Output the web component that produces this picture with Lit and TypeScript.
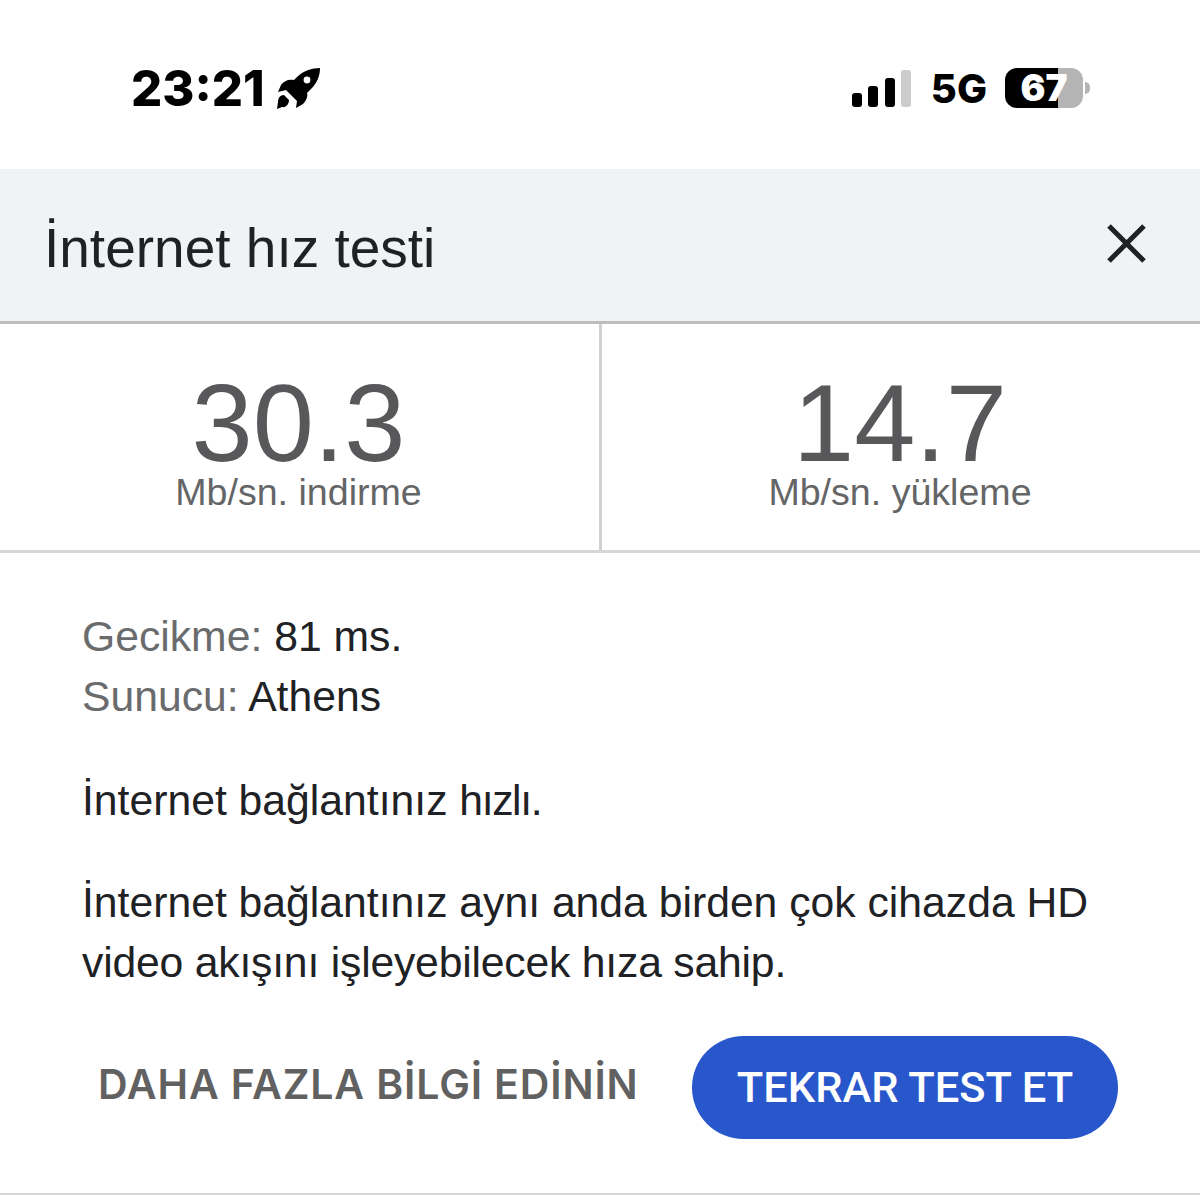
import {LitElement, html, css} from 'lit';
import {customElement} from 'lit/decorators.js';

@customElement('app-root')
export class AppRoot extends LitElement {
  static styles = css`
    :host {
      display: block;
      width: 1200px;
      height: 1195px;
      overflow: hidden;
      background: #fff;
      font-family: "Liberation Sans", Arial, sans-serif;
      color: #202124;
    }

    .status {
      height: 169px;
      box-sizing: border-box;
      padding: 8px 110px 0 131px;
      display: flex;
      align-items: center;
      justify-content: space-between;
      color: #000;
    }

    .status-left,
    .status-right {
      display: flex;
      align-items: center;
    }

    .time {
      font: 800 49px/1 Inter, sans-serif;
    }

    .rocket {
      margin-left: 5px;
      width: 56px;
      height: 54px;
    }

    .signal {
      display: flex;
      align-items: flex-end;
      gap: 6.3px;
      height: 37px;
    }

    .signal span {
      width: 10px;
      border-radius: 3px;
      background: #000;
    }

    .net {
      margin-left: 20px;
      font: 800 40px/1 Inter, sans-serif;
    }

    .battery {
      margin: -2px 0 0 18px;
      display: flex;
      align-items: center;
      gap: 2px;
    }

    .battery-body {
      width: 78px;
      height: 40px;
      border-radius: 12px;
      background: linear-gradient(90deg, #000 0 53px, #b4b4b4 53px);
      color: #fff;
      font: 900 37px/40px Inter, sans-serif;
      text-align: center;
    }

    .battery-cap {
      width: 5px;
      height: 12px;
      border-radius: 0 5px 5px 0;
      background: #b4b4b4;
    }

    .header {
      height: 155px;
      box-sizing: border-box;
      padding: 6px 53px 0 44px;
      display: flex;
      align-items: center;
      justify-content: space-between;
      background: #f1f2f4;
      border-bottom: 3px solid #bcbdbf;
    }

    .title {
      font-size: 55px;
      line-height: 1;
      color: #202124;
    }

    .close {
      width: 41px;
      height: 41px;
      margin-top: -10px;
    }

    .stats {
      height: 229px;
      box-sizing: border-box;
      display: grid;
      grid-template-columns: 599px 1fr;
      border-bottom: 3px solid #d6d6d6;
    }

    .stat {
      padding: 51px 2px 0 0;
      text-align: center;
      color: #58585a;
    }

    .stat + .stat {
      border-left: 3px solid #d0d0d0;
    }

    .value {
      font-size: 110px;
      line-height: 96px;
    }

    .unit {
      font-size: 37.6px;
      line-height: 42px;
      color: #646567;
    }

    .body {
      padding: 53px 82px 0;
      font-size: 42.7px;
      line-height: 60px;
    }

    .label {
      color: #6a6b6d;
    }

    .body p {
      margin: 44px 0 0;
    }

    .body p + p {
      margin-top: 42px;
    }

    .tight {
      letter-spacing: -1.4px;
    }

    .tighter-line {
      letter-spacing: -0.2px;
    }

    .actions {
      margin-top: 44px;
      padding: 0 82px 0 98px;
      display: flex;
      align-items: center;
      justify-content: space-between;
    }

    .more {
      margin-top: -6px;
      font: 600 41px/1 Inter, sans-serif;
      letter-spacing: 0.85px;
      color: #616161;
    }

    .retry {
      width: 426px;
      height: 103px;
      border: none;
      border-radius: 52px;
      background: #2857cc;
      color: #fff;
      font: 500 43.4px/1 Roboto, sans-serif;
    }

    .footer-line {
      margin-top: 54px;
      border-top: 2px solid #d6d6d6;
    }
  `;

  render() {
    return html`
      <div class="status">
        <div class="status-left">
          <span class="time">23:21</span>
          <svg class="rocket" viewBox="0 0 56 54" fill="#000">
            <path fill-rule="evenodd" d="M50 6C42 6 33 9 27 15L24 18C18 17 14 19 11 23L8 30L16 28L27 39L26 46L33 42C37 38 38 33 37 31L41 27C47 21 50 14 50 6ZM37 21.4a3.4 3.4 0 1 1 0-6.8a3.4 3.4 0 0 1 0 6.8Z"></path>
            <path d="M14 33C10 33 8 36 8 40L7 47L12 45C16 46 19 42 19 38Z"></path>
          </svg>
        </div>
        <div class="status-right">
          <div class="signal">
            <span style="height:14px"></span>
            <span style="height:21px"></span>
            <span style="height:29px"></span>
            <span style="height:37px;background:#ccc"></span>
          </div>
          <span class="net">5G</span>
          <div class="battery">
            <div class="battery-body">67</div>
            <div class="battery-cap"></div>
          </div>
        </div>
      </div>
      <div class="header">
        <span class="title">İnternet hız testi</span>
        <svg class="close" viewBox="0 0 41 41" stroke="#202124" stroke-width="5" fill="none">
          <path d="M3 3l35 35M38 3L3 38"></path>
        </svg>
      </div>
      <div class="stats">
        <div class="stat">
          <div class="value">30.3</div>
          <div class="unit">Mb/sn. indirme</div>
        </div>
        <div class="stat">
          <div class="value">14.7</div>
          <div class="unit">Mb/sn. yükleme</div>
        </div>
      </div>
      <div class="body">
        <div><span class="label">Gecikme:</span> 81 ms.</div>
        <div><span class="label">Sunucu:</span> Athens</div>
        <p>İnternet bağlantınız <span class="tight">hızlı.</span></p>
        <p>İnternet bağlantınız aynı anda birden çok cihazda HD <span class="tighter-line">video akışını işleyebilecek hıza sahip.</span></p>
      </div>
      <div class="actions">
        <span class="more">DAHA FAZLA BİLGİ EDİNİN</span>
        <button class="retry">TEKRAR TEST ET</button>
      </div>
      <div class="footer-line"></div>
    `;
  }
}
